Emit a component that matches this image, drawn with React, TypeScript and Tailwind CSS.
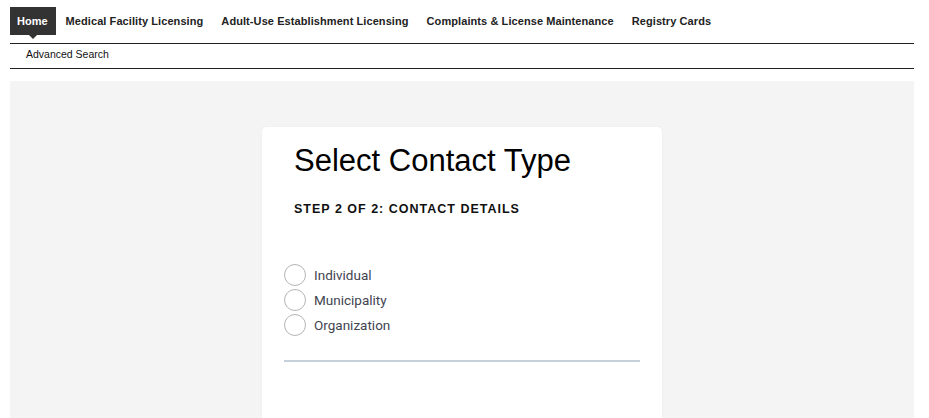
import React from 'react';

const navItems = [
  'Medical Facility Licensing',
  'Adult-Use Establishment Licensing',
  'Complaints & License Maintenance',
  'Registry Cards',
];

const contactTypes = ['Individual', 'Municipality', 'Organization'];

const RadioOption: React.FC<{ label: string }> = ({ label }) => (
  <label className="flex items-center h-[25px] cursor-pointer">
    <span className="w-[22px] h-[22px] rounded-full border border-[#b5b5b5] bg-white shrink-0" />
    <span className="ml-[8px] text-[13.5px] text-[#3f4450] font-['Roboto',sans-serif]">{label}</span>
  </label>
);

export default function App() {
  return (
    <div className="min-h-[418px] bg-white pl-[10px] pr-[15px] font-['Liberation_Sans',Arial,sans-serif] text-[#222]">
      {/* top nav */}
      <nav className="flex items-start gap-[2px] pt-[7px] pb-[8px] border-b border-[#222]">
        <div className="relative h-[28px] flex items-center pl-[7px] pr-[8px] bg-[#333] text-white text-[11px] font-bold">
          Home
          <span className="absolute left-1/2 -translate-x-1/2 top-full w-0 h-0 border-l-[4px] border-r-[4px] border-t-[4px] border-l-transparent border-r-transparent border-t-[#333]" />
        </div>
        {navItems.map((item) => (
          <div key={item} className="h-[28px] flex items-center px-[8px] text-[11px] font-bold tracking-[0.08px] text-[#222]">
            {item}
          </div>
        ))}
      </nav>
      <div className="h-[25px] pt-[3px] pl-[16px] text-[10.5px] leading-[14px] text-[#111] border-b border-[#222]">
        Advanced Search
      </div>

      {/* main area */}
      <main className="mt-[12px] bg-[#f4f4f4] pt-[46px] flex justify-center h-[337px] overflow-hidden">
        <section className="w-[400px] bg-white rounded-t-[4px] shadow-[0_0_1px_rgba(0,0,0,0.15)] px-[22px] pt-[15px]">
          <h1 className="pl-[10px] text-[31px] leading-[37px] text-black">Select Contact Type</h1>
          <h2 className="pl-[10px] mt-[21px] text-[12.5px] font-bold tracking-[1px] text-[#111]">
            STEP 2 OF 2: CONTACT DETAILS
          </h2>
          <div className="mt-[44px] flex flex-col">
            {contactTypes.map((t) => (
              <RadioOption key={t} label={t} />
            ))}
          </div>
          <div className="mt-[22px] h-[2px] bg-[#c5d0da]" />
        </section>
      </main>
    </div>
  );
}
